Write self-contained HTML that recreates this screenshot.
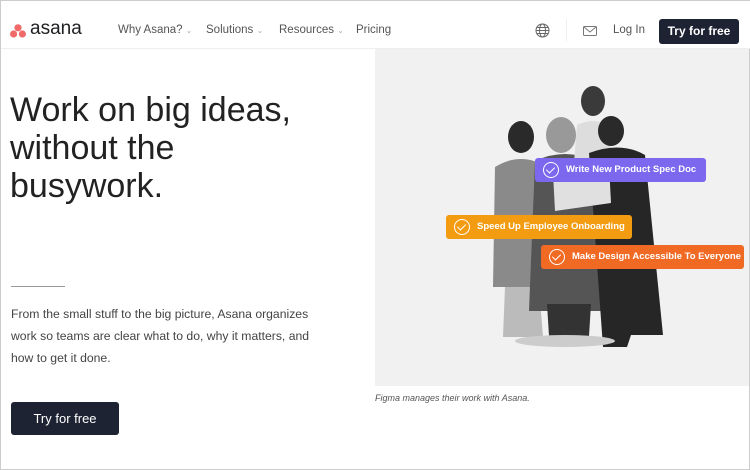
<!DOCTYPE html>
<html><head><style>
*{margin:0;padding:0;box-sizing:border-box}
body{width:750px;height:470px;overflow:hidden;background:#fff;font-family:"Liberation Sans",sans-serif;position:relative;border:1px solid #ccc}
.a{position:absolute}
.nav{font-size:11.5px;color:#555;top:23px}
.tag{position:absolute;height:24px;border-radius:3px;color:#fff;font-size:9.5px;font-weight:bold;line-height:24px;padding-left:31px}
.tag i{position:absolute;left:8px;top:4px;width:16px;height:16px;border:1.5px solid #fff;border-radius:50%}
.tag i:after{content:"";position:absolute;left:4px;top:2px;width:4px;height:7px;border:solid #fff;border-width:0 1.5px 1.5px 0;transform:rotate(45deg)}
</style></head><body>
<div class="a" style="left:0;top:0;width:750px;height:48px;border-bottom:1px solid #eee;background:#fff"></div>
<svg class="a" style="left:9px;top:23px" width="16" height="14"><circle cx="8" cy="3.8" r="3.6" fill="#f06a6a"/><circle cx="3.6" cy="10" r="3.6" fill="#f06a6a"/><circle cx="12.4" cy="10" r="3.6" fill="#f06a6a"/></svg>
<div class="a" style="left:29px;top:17px;font-size:19px;color:#1e1f21">asana</div>
<div class="a nav" style="left:117px">Why Asana? <span style="font-size:8px;color:#aaa">⌄</span></div>
<div class="a nav" style="left:205px">Solutions <span style="font-size:8px;color:#aaa">⌄</span></div>
<div class="a nav" style="left:278px">Resources <span style="font-size:8px;color:#aaa">⌄</span></div>
<div class="a nav" style="left:355px">Pricing</div>
<svg class="a" style="left:534px;top:22px" width="15" height="15" fill="none" stroke="#666" stroke-width="1"><circle cx="7.5" cy="7.5" r="6.5"/><ellipse cx="7.5" cy="7.5" rx="3" ry="6.5"/><path d="M1 7.5h13M2 4.5h11M2 10.5h11"/></svg>
<div class="a" style="left:565px;top:18px;width:1px;height:22px;background:#eee"></div>
<svg class="a" style="left:582px;top:25px" width="14" height="10" fill="none" stroke="#777"><rect x="0.5" y="0.5" width="13" height="9" rx="1"/><path d="M1 1l6 5 6-5"/></svg>
<div class="a nav" style="left:612px;top:23px">Log In</div>
<div class="a" style="left:658px;top:18px;width:80px;height:25px;background:#1e2333;color:#fff;border-radius:3px;font-size:12px;font-weight:bold;text-align:center;line-height:25px">Try for free</div>
<div class="a" style="left:9px;top:90px;font-size:34px;line-height:38px;color:#222">Work on big ideas,<br>without the<br>busywork.</div>
<div class="a" style="left:10px;top:285px;width:54px;height:1px;background:#999"></div>
<div class="a" style="left:10px;top:302px;font-size:12.2px;line-height:22px;color:#444">From the small stuff to the big picture, Asana organizes<br>work so teams are clear what to do, why it matters, and<br>how to get it done.</div>
<div class="a" style="left:10px;top:401px;width:108px;height:33px;background:#1e2333;color:#fff;border-radius:3px;font-size:13px;text-align:center;line-height:33px">Try for free</div>
<div class="a" style="left:374px;top:48px;width:374px;height:337px;background:#f1f1f1;overflow:hidden">
<svg width="374" height="337">
<ellipse cx="146" cy="88" rx="13" ry="16" fill="#2a2a2a"/>
<path d="M120 118q26-16 52 0l6 120h-60z" fill="#8a8a8a"/>
<path d="M130 238h34l4 50h-40z" fill="#bbb"/>
<ellipse cx="186" cy="86" rx="15" ry="18" fill="#999"/>
<path d="M160 112q30-14 60 0l8 150h-74z" fill="#555"/>
<path d="M172 255h44l-2 32h-40z" fill="#333"/>
<ellipse cx="218" cy="52" rx="12" ry="15" fill="#3a3a3a"/>
<path d="M202 76q16-8 32 0l4 50h-40z" fill="#ddd"/>
<ellipse cx="236" cy="82" rx="13" ry="15" fill="#2a2a2a"/>
<path d="M214 104q32-12 56 2l18 180h-32l-4 12h-24z" fill="#262626"/>
<path d="M178 124l56-8 2 38-56 8z" fill="#e0e0e0"/>
<ellipse cx="190" cy="292" rx="50" ry="6" fill="#ccc"/>
</svg>
</div>
<div class="tag" style="left:534px;top:157px;width:171px;background:#7b68ee"><i></i>Write New Product Spec Doc</div>
<div class="tag" style="left:445px;top:214px;width:186px;background:#f39c12"><i></i>Speed Up Employee Onboarding</div>
<div class="tag" style="left:540px;top:244px;width:203px;background:#f06a24"><i></i>Make Design Accessible To Everyone</div>
<div class="a" style="left:374px;top:392px;font-size:9px;font-style:italic;color:#555">Figma manages their work with Asana.</div>
</body></html>
